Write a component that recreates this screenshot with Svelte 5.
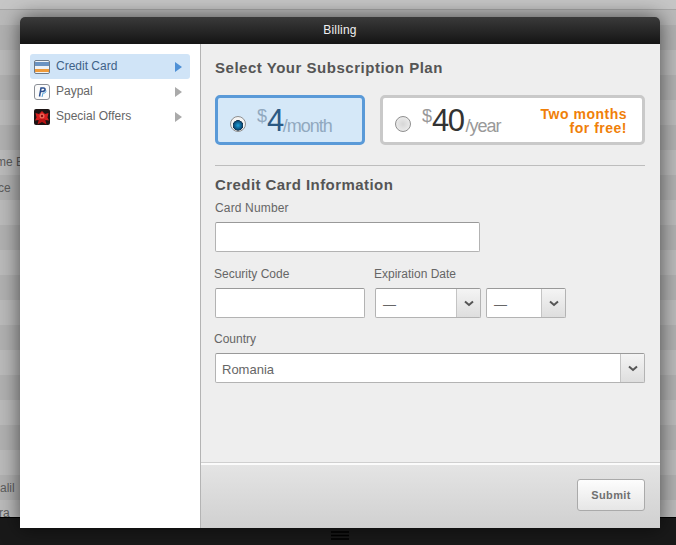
<script>
    let rows = [
        '', '', '', '', '', '', 'me Blog', 'ce', '', '', '', '', '', '', '', '', '', '', '', 'alil', 'ra'
    ];

    let menu = [
        { id: 'card', label: 'Credit Card', active: true },
        { id: 'paypal', label: 'Paypal' },
        { id: 'offers', label: 'Special Offers' }
    ];
</script>

<div class="page">
    <div class="topstrip"></div>
    <div class="rows">
        {#each rows as row, i}
            <div class="row" class:odd={i % 2 === 1}>{row}</div>
        {/each}
    </div>
    <div class="bottombar">
        <svg width="18" height="9" viewBox="0 0 18 9"><path d="M0 1h18M0 4.500h18M0 8h18" stroke="#000" stroke-width="1.500" /></svg>
    </div>

    <div class="modal">
        <div class="modal-head">Billing</div>
        <div class="modal-body">
            <aside class="side">
                {#each menu as item}
                    <div class="side-item" class:active={item.active}>
                        <span class="side-icon">
                            {#if item.id === 'card'}
                                <svg width="16" height="14" viewBox="0 0 16 14">
                                    <rect x="0.500" y="0.500" width="15" height="13" rx="1.500" fill="#eef2f6" stroke="#6d7a88" />
                                    <rect x="1" y="2" width="14" height="4" fill="#6a93c2" />
                                    <rect x="1" y="9" width="14" height="3" fill="#ee9a3a" />
                                </svg>
                            {:else if item.id === 'paypal'}
                                <svg width="16" height="16" viewBox="0 0 16 16">
                                    <rect x="0.500" y="0.500" width="15" height="15" rx="2.500" fill="#fbfbfb" stroke="#8b8f96" />
                                    <path d="M8 13l1-4h1.500c1.500 0 2-3 .5-3.500" fill="none" stroke="#4f9fd8" stroke-width="1" />
                                    <path d="M5.500 12.500L7 4h2.500c2.300 0 2 3.500-1 3.500H7" fill="none" stroke="#2b4f8f" stroke-width="1.500" />
                                </svg>
                            {:else}
                                <svg width="16" height="16" viewBox="0 0 16 16">
                                    <rect width="16" height="16" rx="2" fill="#1c1414" />
                                    <path d="M1.500 4l3.500 1 3-3 3 3 3.500-1-1 4.500 1.500 3-3.500-.5-1 1h-5l-1-1-3.500.5 1.500-3z" fill="#d61f1f" />
                                    <path d="M5 10L3.500 15.500 8 13l4.500 2.500L11 10z" fill="#b81414" />
                                    <circle cx="8" cy="7" r="2.500" fill="#f06a5a" />
                                    <circle cx="8" cy="7" r="1.200" fill="#8c1010" />
                                </svg>
                            {/if}
                        </span>
                        <span class="side-label">{item.label}</span>
                        <span class="side-arrow"></span>
                    </div>
                {/each}
            </aside>

            <section class="main">
                <div class="content">
                    <h2 class="plan-title">Select Your Subscription Plan</h2>
                    <div class="plans">
                        <div class="plan monthly">
                            <span class="radio on"></span>
                            <span class="price"><sup>$</sup><b>4</b><em>/month</em></span>
                        </div>
                        <div class="plan yearly">
                            <span class="radio"></span>
                            <span class="price"><sup>$</sup><b>40</b><em>/year</em></span>
                            <span class="promo">Two months<br />for free!</span>
                        </div>
                    </div>
                    <hr />
                    <h2 class="info-title">Credit Card Information</h2>
                    <div class="label first">Card Number</div>
                    <div class="input number"></div>
                    <div class="two">
                        <div>
                            <div class="label">Security Code</div>
                            <div class="input code"></div>
                        </div>
                        <div>
                            <div class="label">Expiration Date</div>
                            <div class="dates">
                                <div class="select month">
                                    <span class="value dash">—</span>
                                    <span class="caret"><svg width="10" height="7" viewBox="0 0 10 7"><path d="M1 1.500l4 3.500 4-3.500" fill="none" stroke="#555" stroke-width="2" /></svg></span>
                                </div>
                                <div class="select year">
                                    <span class="value dash">—</span>
                                    <span class="caret"><svg width="10" height="7" viewBox="0 0 10 7"><path d="M1 1.500l4 3.500 4-3.500" fill="none" stroke="#555" stroke-width="2" /></svg></span>
                                </div>
                            </div>
                        </div>
                    </div>
                    <div class="label country-label">Country</div>
                    <div class="select country">
                        <span class="value">Romania</span>
                        <span class="caret"><svg width="10" height="7" viewBox="0 0 10 7"><path d="M1 1.500l4 3.500 4-3.500" fill="none" stroke="#555" stroke-width="2" /></svg></span>
                    </div>
                </div>
                <div class="foot">
                    <button class="submit">Submit</button>
                </div>
            </section>
        </div>
    </div>
</div>

<style>
    :global(body) {
        margin: 0;
        overflow: hidden;
    }

    .page {
        position: relative;
        width: 676px;
        height: 545px;
        overflow: hidden;
        background: #b4b4b4;
        font-family: "Liberation Sans", Arial, sans-serif;
    }

    .topstrip {
        height: 9px;
        background: #c6c6c6;
        border-bottom: 1px solid #a6a6a6;
    }

    .rows {
        height: 507px;
        overflow: hidden;
    }

    .row {
        height: 25px;
        line-height: 27px;
        font-size: 12px;
        color: #5c5c5c;
        background: #bababa;
        white-space: nowrap;
    }

    .row.odd {
        background: #b0b0b0;
    }

    .row:first-child {
        height: 15px;
    }

    /* page text behind the overlay is cut by the window edge */
    .row:nth-child(7) {
        text-indent: -4px;
        line-height: 25px;
    }

    .row:nth-child(8) {
        text-indent: -2px;
    }

    .row:nth-child(21) {
        text-indent: -1px;
    }

    .bottombar {
        height: 28px;
        box-sizing: border-box;
        background: #191919;
        border-top: 1px solid #000;
        display: flex;
        justify-content: center;
        align-items: flex-end;
        padding-left: 4px;
        padding-bottom: 5px;
    }

    .modal {
        position: absolute;
        left: 20px;
        top: 17px;
        width: 640px;
        height: 511px;
        display: flex;
        flex-direction: column;
        border-radius: 5px 5px 0 0;
        box-shadow: 0 0 20px rgba(0, 0, 0, 0.6);
    }

    .modal-head {
        height: 27px;
        line-height: 27px;
        text-align: center;
        font-size: 12px;
        letter-spacing: 0.2px;
        color: #f0f0f0;
        background: linear-gradient(#3a3a3a, #141414);
        border-radius: 5px 5px 0 0;
    }

    .modal-body {
        flex: 1;
        display: flex;
        min-height: 0;
    }

    .side {
        width: 181px;
        box-sizing: border-box;
        background: #fff;
        border-right: 1px solid #b4b4b4;
        padding: 10px 10px 0;
    }

    .side-item {
        width: 160px;
        height: 25px;
        display: flex;
        align-items: center;
        border-radius: 3px;
        font-size: 12px;
        color: #666;
    }

    .side-item.active {
        background: #d0e4f7;
        color: #3f6288;
    }

    .side-icon {
        width: 16px;
        height: 16px;
        margin-left: 4px;
        display: flex;
        align-items: center;
    }

    .side-icon svg {
        display: block;
    }

    .side-label {
        margin-left: 6px;
        margin-bottom: 2px;
        flex: 1;
    }

    .side-arrow {
        width: 0;
        height: 0;
        margin-right: 8px;
        border-left: 7px solid #aaa;
        border-top: 5px solid transparent;
        border-bottom: 5px solid transparent;
    }

    .active .side-arrow {
        border-left-color: #4e90d6;
    }

    .main {
        flex: 1;
        display: flex;
        flex-direction: column;
        background: #eee;
        min-width: 0;
    }

    .content {
        flex: 1;
        box-sizing: border-box;
        padding: 0 15px 0 14px;
    }

    h2 {
        margin: 0;
        font-size: 15px;
        font-weight: bold;
        color: #555;
        line-height: 18px;
    }

    .plan-title {
        padding-top: 15px;
        letter-spacing: 0.52px;
    }

    .plans {
        display: flex;
        gap: 15px;
        margin-top: 18px;
    }

    .plan {
        box-sizing: border-box;
        height: 50px;
        display: flex;
        align-items: center;
        border-radius: 5px;
        background: #fff;
        border: 3px solid #c9c9c9;
        padding-left: 12px;
    }

    .monthly {
        width: 150px;
        background: #d5e8f8;
        border-color: #5a9ad8;
    }

    .yearly {
        width: 265px;
    }

    .radio {
        flex: none;
        box-sizing: border-box;
        width: 16px;
        height: 16px;
        border-radius: 50%;
        border: 1px solid #8f8f8f;
        background: radial-gradient(circle, #d6d6d6, #f2f2f2);
        margin-top: 8px;
    }

    .radio.on {
        background: radial-gradient(circle at 50% 60%, #1ea0d8 0, #0b4f7e 4px, #17324a 5px, #f4f4f4 5.500px);
    }

    .price {
        margin-left: 11px;
        margin-top: 7px;
        white-space: nowrap;
        line-height: 32px;
        color: #91a9bf;
    }

    .price sup {
        font-size: 18px;
        line-height: 18px;
        vertical-align: 9px;
    }

    .price b {
        font-size: 31px;
        font-weight: normal;
        color: #2c5a84;
        letter-spacing: -1.5px;
    }

    .price em {
        font-style: normal;
        font-size: 18px;
        letter-spacing: -1px;
        margin-left: 0;
        vertical-align: -1px;
    }

    .yearly .price {
        color: #999;
    }

    .yearly .price b {
        color: #333;
    }

    .yearly .price em {
        margin-left: 2px;
    }

    .promo {
        margin-left: auto;
        padding-right: 15px;
        padding-top: 2px;
        text-align: right;
        font-size: 14px;
        line-height: 14px;
        font-weight: bold;
        letter-spacing: 0.5px;
        color: #f07f09;
    }

    hr {
        margin: 20px 0 0;
        border: 0;
        height: 1px;
        background: #bdbdbd;
    }

    .info-title {
        margin-top: 10px;
        letter-spacing: 0.43px;
    }

    .label {
        font-size: 12px;
        line-height: 14px;
        color: #666;
        margin-top: 15px;
        margin-bottom: 7px;
        margin-left: -1px;
    }

    .label.first {
        margin-top: 7px;
        margin-left: 0;
        letter-spacing: 0.15px;
    }

    .label.country-label {
        margin-top: 14px;
    }

    .input {
        box-sizing: border-box;
        height: 30px;
        background: #fff;
        border: 1px solid #b3b3b3;
        border-top-color: #999;
        border-radius: 2px;
    }

    .number {
        width: 265px;
    }

    .code {
        width: 150px;
    }

    .two {
        display: flex;
        gap: 10px;
    }

    .dates {
        display: flex;
        gap: 5px;
    }

    .select {
        box-sizing: border-box;
        height: 30px;
        display: flex;
        background: #fff;
        border: 1px solid #b3b3b3;
        border-top-color: #999;
        border-radius: 2px;
    }

    .month {
        width: 106px;
    }

    .year {
        width: 80px;
    }

    .country {
        width: 430px;
    }

    .value {
        flex: 1;
        padding-left: 6px;
        font-size: 13px;
        line-height: 31px;
        color: #666;
    }

    .value.dash {
        padding-left: 7px;
        line-height: 32px;
    }

    .caret {
        width: 23px;
        display: flex;
        align-items: center;
        justify-content: center;
        background: linear-gradient(#f4f4f4, #dedede);
        border-left: 1px solid #c4c4c4;
    }

    .foot {
        height: 65px;
        box-sizing: border-box;
        background: linear-gradient(#e4e4e4, #d0d0d0);
        border-top: 2px solid #fbfbfb;
        box-shadow: 0 -1px 0 #cfcfcf;
        display: flex;
        justify-content: flex-end;
        padding: 14px 15px 0 0;
    }

    .submit {
        width: 68px;
        height: 32px;
        padding: 0;
        border: 1px solid #aaa;
        border-radius: 3px;
        background: linear-gradient(#fdfdfd, #e6e6e6);
        font-family: inherit;
        font-size: 11px;
        font-weight: bold;
        letter-spacing: 0.4px;
        color: #707070;
    }
</style>
